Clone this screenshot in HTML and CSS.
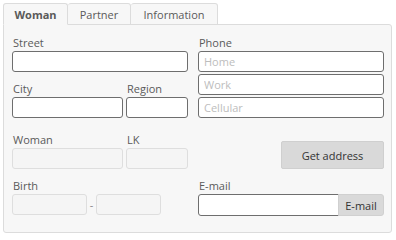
FILE: index.html
```html
<!DOCTYPE html>
<html>
<head>
    <title>Address</title>
    <link rel="stylesheet" href="styles.css">
</head>
<body>
    <div class="tabs">
        <div class="tab active">Woman</div>
        <div class="tab">Partner</div>
        <div class="tab">Information</div>
    </div>
    <div class="panel">
        <div class="col left">
            <label class="lbl">Street</label>
            <input class="field" type="text">

            <div class="pair gap-10">
                <div class="grow">
                    <label class="lbl">City</label>
                    <input class="field" type="text">
                </div>
                <div class="small">
                    <label class="lbl">Region</label>
                    <input class="field" type="text">
                </div>
            </div>

            <div class="pair gap-15">
                <div class="grow">
                    <label class="lbl">Woman</label>
                    <input class="field" type="text" disabled>
                </div>
                <div class="small">
                    <label class="lbl">LK</label>
                    <input class="field" type="text" disabled>
                </div>
            </div>

            <div class="gap-10">
                <label class="lbl">Birth</label>
                <div class="birth">
                    <input class="field b1" type="text" disabled>
                    <span class="dash">-</span>
                    <input class="field b2" type="text" disabled>
                </div>
            </div>
        </div>

        <div class="col right">
            <label class="lbl">Phone</label>
            <input class="field" type="text" placeholder="Home">
            <input class="field stack" type="text" placeholder="Work">
            <input class="field stack" type="text" placeholder="Cellular">

            <div class="btn-row">
                <button class="btn">Get address</button>
            </div>

            <div class="gap-10">
                <label class="lbl">E-mail</label>
                <div class="addon-group">
                    <input class="field" type="text">
                    <button class="addon">E-mail</button>
                </div>
            </div>
        </div>
    </div>
</body>
</html>
```

FILE: styles.css
```css
body {
    font-family: "Open Sans", "Noto Sans", sans-serif;
    font-size: 11px;
    color: #5a5a5a;
    background-color: #fff;
    margin: 0;
    padding: 3px 4px 0 3px;
}

.tabs {
    display: flex;
    height: 21px;
    position: relative;
    z-index: 1;
}

.tab {
    box-sizing: border-box;
    height: 22px;
    padding: 3px 12px 0 12px;
    border: 1px solid #dcdcdc;
    border-left: none;
    border-radius: 3px 3px 0 0;
    background: #f7f7f7;
    color: #5a5a5a;
}

.tab:first-child {
    border-left: 1px solid #dcdcdc;
}

.tab.active {
    font-weight: bold;
    border-bottom-color: #f7f7f7;
    width: 65px;
    text-align: center;
    padding: 3px 0 0 0;
}

.tab:nth-child(2) {
    width: 63px;
    text-align: center;
    padding: 3px 0 0 0;
}

.tab:nth-child(3) {
    width: 87px;
    text-align: center;
    padding: 3px 0 0 0;
}

.panel {
    display: flex;
    gap: 10px;
    height: 209px;
    box-sizing: border-box;
    padding: 11px 7px 0 8px;
    background: #f7f7f7;
    border: 1px solid #dcdcdc;
    border-radius: 0 3px 3px 3px;
}

.col {
    display: flex;
    flex-direction: column;
}

.left {
    width: 176px;
}

.right {
    width: 186px;
}

.lbl {
    display: block;
    height: 15px;
    line-height: 14px;
    padding-left: 1px;
}

.field {
    display: block;
    box-sizing: border-box;
    width: 100%;
    height: 21px;
    margin: 0;
    padding: 0 5px;
    font-family: inherit;
    font-size: 11px;
    color: #333;
    background: #fff;
    border: 1px solid #6e6e6e;
    border-radius: 3px;
    outline: none;
}

.field::placeholder {
    color: #bdbdbd;
}

.field:disabled {
    background: #f5f5f5;
    border-color: #dedede;
}

.stack {
    margin-top: 2px;
}

.pair {
    display: flex;
    gap: 3px;
}

.grow {
    width: 111px;
}

.small {
    width: 62px;
}

.gap-10 {
    margin-top: 10px;
}

.gap-15 {
    margin-top: 15px;
}

.birth {
    display: flex;
    align-items: center;
}

.b1 {
    width: 75px;
}

.b2 {
    width: 65px;
}

.dash {
    width: 9px;
    text-align: center;
    color: #888;
}

.btn-row {
    display: flex;
    justify-content: flex-end;
    margin-top: 23px;
}

.btn {
    width: 103px;
    height: 28px;
    font-family: inherit;
    font-size: 11px;
    color: #333;
    background: #d9d9d9;
    border: 1px solid #cfcfcf;
    border-radius: 2px;
}

.addon-group {
    display: flex;
}

.addon-group .field {
    width: 141px;
    height: 22px;
    border-radius: 3px 0 0 3px;
}

.addon {
    width: 46px;
    height: 22px;
    margin-left: -1px;
    padding: 0;
    font-family: inherit;
    font-size: 11px;
    color: #333;
    background: #d9d9d9;
    border: 1px solid #d0d0d0;
    border-radius: 0 3px 3px 0;
}
```
